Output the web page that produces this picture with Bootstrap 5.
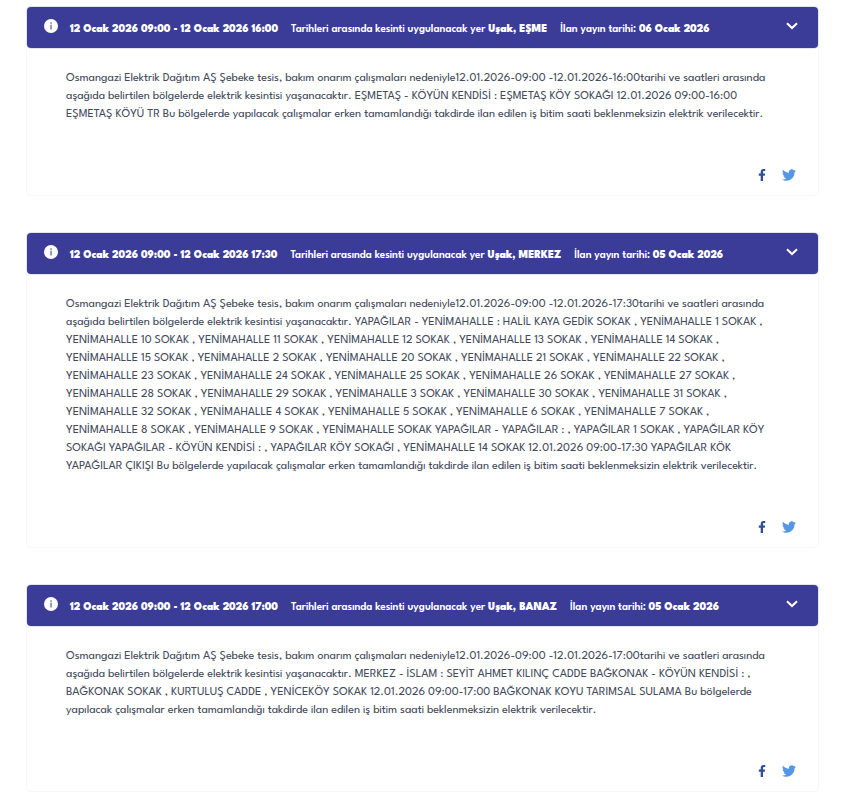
<!DOCTYPE html>
<html lang="tr">
<head>
<meta charset="utf-8">
<meta name="viewport" content="width=device-width, initial-scale=1">
<title>Planlı Elektrik Kesintileri</title>
<link href="https://cdn.jsdelivr.net/npm/bootstrap@5.3.0/dist/css/bootstrap.min.css" rel="stylesheet">
<style>
body { font-family: "League Spartan", Lato, "Open Sans", sans-serif; font-size: 12px; line-height: 18px; color: #434a5a; background: #fff; }
.outage-list { padding: 6px 22px 11px 26px; gap: 36px; }
.outage { border: 1px solid #f8f8f8; border-radius: 4px; color: inherit; }
.outage-head { background: #3b3b98; color: #fff; font-size: 11px; font-weight: 600; line-height: 18px; padding: 0 20px 0 17px; height: 41px; border: 0; border-radius: 4px; box-shadow: 0 0 0 1px #e4e4ee; text-align: left; }
.outage-head b { font-weight: 900; }
.outage-head .info { margin: 0 12px 4px 0; }
.outage-head .chev { margin: 0 0 4px auto; }
.outage-title { gap: 0 13px; padding-top: 2px; }
.outage-body { padding: 22px 38px 0 39px; }
.outage-body p { margin: 0; }
.share { gap: 14px; padding: 44px 22px 13px; }
.share a { display: flex; }
</style>
<script src="https://cdn.jsdelivr.net/npm/bootstrap@5.3.0/dist/js/bootstrap.bundle.min.js" defer></script>
</head>
<body>
<svg class="d-none" aria-hidden="true">
  <symbol id="i-info" viewBox="0 0 14 14"><circle cx="7" cy="7" r="7" fill="#fff"/><path d="M6.3 3.3h1.5v1.4H6.3zM6.3 5.8h1.5v4.6H6.3z" fill="#77779f"/></symbol>
  <symbol id="i-chev" viewBox="0 0 12 8"><path d="M1 1.300 6 6l5-4.700" fill="none" stroke="#fff" stroke-width="2.100"/></symbol>
  <symbol id="i-fb" viewBox="0 0 320 512"><path fill="#2f4f94" d="M279.140 288l14.220-92.660h-88.910v-60.130c0-25.350 12.420-50.060 52.240-50.060h40.420V6.260S260.430 0 225.360 0c-73.220 0-121.080 44.380-121.080 124.720v70.620H22.890V288h81.390v224h100.170V288z"/></symbol>
  <symbol id="i-tw" viewBox="0 0 512 512"><path fill="#5596e6" d="M459.370 151.716c.325 4.548.325 9.097.325 13.645 0 138.720-105.583 298.558-298.558 298.558-59.452 0-114.680-17.219-161.137-47.106 8.447.974 16.568 1.299 25.340 1.299 49.055 0 94.213-16.568 130.274-44.832-46.132-.975-84.792-31.188-98.112-72.772 6.498.974 12.995 1.624 19.818 1.624 9.421 0 18.843-1.300 27.614-3.573-48.081-9.747-84.143-51.980-84.143-102.985v-1.299c13.969 7.797 30.214 12.670 47.431 13.319-28.264-18.843-46.781-51.005-46.781-87.391 0-19.492 5.197-37.360 14.294-52.954 51.655 63.675 129.300 105.258 216.365 109.807-1.624-7.797-2.599-15.918-2.599-24.040 0-57.828 46.782-104.934 104.934-104.934 30.213 0 57.502 12.670 76.670 33.137 23.715-4.548 46.456-13.320 66.599-25.340-7.798 24.366-24.366 44.833-46.132 57.827 21.117-2.273 41.584-8.122 60.426-16.243-14.292 20.791-32.161 39.308-52.628 54.253z"/></symbol>
</svg>

<main class="outage-list d-flex flex-column">
  <article class="card outage">
    <button type="button" class="outage-head d-flex align-items-center w-100" data-bs-toggle="collapse" data-bs-target="#outage1" aria-expanded="true" aria-controls="outage1">
      <svg class="info flex-shrink-0" width="14" height="14" aria-hidden="true"><use href="#i-info"/></svg>
      <span class="outage-title d-flex flex-wrap"><b>12 Ocak 2026 09:00 - 12 Ocak 2026 16:00</b><span>Tarihleri arasında kesinti uygulanacak yer <b>Uşak, EŞME</b></span><span>İlan yayın tarihi: <b>06 Ocak 2026</b></span></span>
      <svg class="chev flex-shrink-0" width="12" height="8" aria-hidden="true"><use href="#i-chev"/></svg>
    </button>
    <div id="outage1" class="collapse show">
      <div class="outage-body">
        <p>Osmangazi Elektrik Dağıtım AŞ Şebeke tesis, bakım onarım çalışmaları nedeniyle12.01.2026-09:00 -12.01.2026-16:00tarihi ve saatleri arasında
        aşağıda belirtilen bölgelerde elektrik kesintisi yaşanacaktır. EŞMETAŞ - KÖYÜN KENDİSİ : EŞMETAŞ KÖY SOKAĞI 12.01.2026 09:00-16:00
        EŞMETAŞ KÖYÜ TR Bu bölgelerde yapılacak çalışmalar erken tamamlandığı takdirde ilan edilen iş bitim saati beklenmeksizin elektrik verilecektir.</p>
      </div>
      <div class="share d-flex justify-content-end align-items-center">
        <a href="#" aria-label="Facebook'ta paylaş"><svg width="12" height="12"><use href="#i-fb"/></svg></a>
        <a href="#" aria-label="Twitter'da paylaş"><svg width="14" height="14"><use href="#i-tw"/></svg></a>
      </div>
    </div>
  </article>

  <article class="card outage">
    <button type="button" class="outage-head d-flex align-items-center w-100" data-bs-toggle="collapse" data-bs-target="#outage2" aria-expanded="true" aria-controls="outage2">
      <svg class="info flex-shrink-0" width="14" height="14" aria-hidden="true"><use href="#i-info"/></svg>
      <span class="outage-title d-flex flex-wrap"><b>12 Ocak 2026 09:00 - 12 Ocak 2026 17:30</b><span>Tarihleri arasında kesinti uygulanacak yer <b>Uşak, MERKEZ</b></span><span>İlan yayın tarihi: <b>05 Ocak 2026</b></span></span>
      <svg class="chev flex-shrink-0" width="12" height="8" aria-hidden="true"><use href="#i-chev"/></svg>
    </button>
    <div id="outage2" class="collapse show">
      <div class="outage-body">
        <p>Osmangazi Elektrik Dağıtım AŞ Şebeke tesis, bakım onarım çalışmaları nedeniyle12.01.2026-09:00 -12.01.2026-17:30tarihi ve saatleri arasında
        aşağıda belirtilen bölgelerde elektrik kesintisi yaşanacaktır. YAPAĞILAR - YENİMAHALLE : HALİL KAYA GEDİK SOKAK , YENİMAHALLE 1 SOKAK ,
        YENİMAHALLE 10 SOKAK , YENİMAHALLE 11 SOKAK , YENİMAHALLE 12 SOKAK , YENİMAHALLE 13 SOKAK , YENİMAHALLE 14 SOKAK ,
        YENİMAHALLE 15 SOKAK , YENİMAHALLE 2 SOKAK , YENİMAHALLE 20 SOKAK , YENİMAHALLE 21 SOKAK , YENİMAHALLE 22 SOKAK ,
        YENİMAHALLE 23 SOKAK , YENİMAHALLE 24 SOKAK , YENİMAHALLE 25 SOKAK , YENİMAHALLE 26 SOKAK , YENİMAHALLE 27 SOKAK ,
        YENİMAHALLE 28 SOKAK , YENİMAHALLE 29 SOKAK , YENİMAHALLE 3 SOKAK , YENİMAHALLE 30 SOKAK , YENİMAHALLE 31 SOKAK ,
        YENİMAHALLE 32 SOKAK , YENİMAHALLE 4 SOKAK , YENİMAHALLE 5 SOKAK , YENİMAHALLE 6 SOKAK , YENİMAHALLE 7 SOKAK ,
        YENİMAHALLE 8 SOKAK , YENİMAHALLE 9 SOKAK , YENİMAHALLE SOKAK YAPAĞILAR - YAPAĞILAR : , YAPAĞILAR 1 SOKAK , YAPAĞILAR KÖY
        SOKAĞI YAPAĞILAR - KÖYÜN KENDİSİ : , YAPAĞILAR KÖY SOKAĞI , YENİMAHALLE 14 SOKAK 12.01.2026 09:00-17:30 YAPAĞILAR KÖK
        YAPAĞILAR ÇIKIŞI Bu bölgelerde yapılacak çalışmalar erken tamamlandığı takdirde ilan edilen iş bitim saati beklenmeksizin elektrik verilecektir.</p>
      </div>
      <div class="share d-flex justify-content-end align-items-center">
        <a href="#" aria-label="Facebook'ta paylaş"><svg width="12" height="12"><use href="#i-fb"/></svg></a>
        <a href="#" aria-label="Twitter'da paylaş"><svg width="14" height="14"><use href="#i-tw"/></svg></a>
      </div>
    </div>
  </article>

  <article class="card outage">
    <button type="button" class="outage-head d-flex align-items-center w-100" data-bs-toggle="collapse" data-bs-target="#outage3" aria-expanded="true" aria-controls="outage3">
      <svg class="info flex-shrink-0" width="14" height="14" aria-hidden="true"><use href="#i-info"/></svg>
      <span class="outage-title d-flex flex-wrap"><b>12 Ocak 2026 09:00 - 12 Ocak 2026 17:00</b><span>Tarihleri arasında kesinti uygulanacak yer <b>Uşak, BANAZ</b></span><span>İlan yayın tarihi: <b>05 Ocak 2026</b></span></span>
      <svg class="chev flex-shrink-0" width="12" height="8" aria-hidden="true"><use href="#i-chev"/></svg>
    </button>
    <div id="outage3" class="collapse show">
      <div class="outage-body">
        <p>Osmangazi Elektrik Dağıtım AŞ Şebeke tesis, bakım onarım çalışmaları nedeniyle12.01.2026-09:00 -12.01.2026-17:00tarihi ve saatleri arasında
        aşağıda belirtilen bölgelerde elektrik kesintisi yaşanacaktır. MERKEZ - İSLAM : SEYİT AHMET KILINÇ CADDE BAĞKONAK - KÖYÜN KENDİSİ : ,
        BAĞKONAK SOKAK , KURTULUŞ CADDE , YENİCEKÖY SOKAK 12.01.2026 09:00-17:00 BAĞKONAK KOYU TARIMSAL SULAMA Bu bölgelerde
        yapılacak çalışmalar erken tamamlandığı takdirde ilan edilen iş bitim saati beklenmeksizin elektrik verilecektir.</p>
      </div>
      <div class="share d-flex justify-content-end align-items-center">
        <a href="#" aria-label="Facebook'ta paylaş"><svg width="12" height="12"><use href="#i-fb"/></svg></a>
        <a href="#" aria-label="Twitter'da paylaş"><svg width="14" height="14"><use href="#i-tw"/></svg></a>
      </div>
    </div>
  </article>
</main>
</body>
</html>
